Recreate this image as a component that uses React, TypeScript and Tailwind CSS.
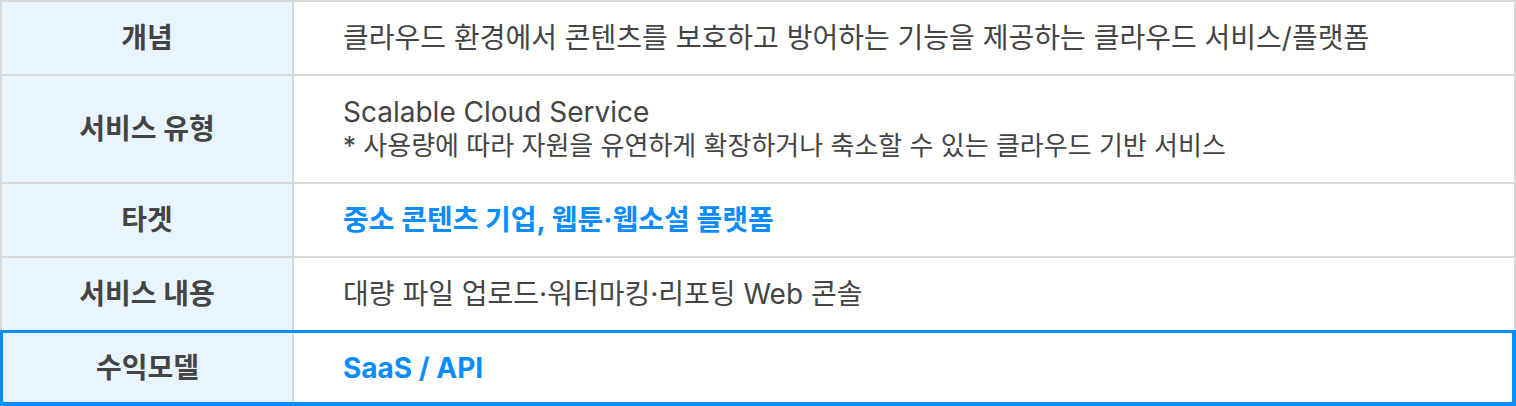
export default function App() {
  const Row = ({
    label,
    children,
    h,
    last,
  }: {
    label: string;
    children: React.ReactNode;
    h: string;
    last?: boolean;
  }) => (
    <div className={`flex ${h} ${last ? "" : "border-b-2 border-[#d9d9d9]"}`}>
      <div className="w-[292px] shrink-0 bg-[#e8f5fe] border-r-2 border-[#d9d9d9] flex items-center justify-center text-[28px] font-bold text-[#444444]">
        {label}
      </div>
      <div className="flex-1 flex flex-col justify-center pl-[49px] text-[#444444]">
        {children}
      </div>
    </div>
  );

  return (
    <div className="w-[1516px] h-[406px] bg-white font-['Inter','Noto_Sans_CJK_KR',sans-serif]">
      <div className="border-2 border-b-0 border-[#d9d9d9]">
        <Row label="개념" h="h-[74px]">
          <div className="text-[28px] leading-[34px]">
            클라우드 환경에서 콘텐츠를 보호하고 방어하는 기능을 제공하는 클라우드 서비스/플랫폼
          </div>
        </Row>
        <Row label="서비스 유형" h="h-[108px]">
          <div className="text-[28px] leading-[34px]">Scalable Cloud Service</div>
          <div className="text-[26px] leading-[34px]">
            * 사용량에 따라 자원을 유연하게 확장하거나 축소할 수 있는 클라우드 기반 서비스
          </div>
        </Row>
        <Row label="타겟" h="h-[74px]">
          <div className="text-[28px] leading-[34px] font-bold text-[#0a8cff]">
            중소 콘텐츠 기업, 웹툰·웹소설 플랫폼
          </div>
        </Row>
        <Row label="서비스 내용" h="h-[72px]" last>
          <div className="text-[28px] leading-[34px]">
            대량 파일 업로드·워터마킹·리포팅 Web 콘솔
          </div>
        </Row>
      </div>
      <div className="flex h-[76px] border-t-[3px] border-l-[3px] border-r-[4px] border-b-[4px] border-[#0a8cff]">
        <div className="w-[291px] shrink-0 bg-[#e8f5fe] border-r-2 border-[#d9d9d9] flex items-center justify-center text-[28px] font-bold text-[#444444]">
          수익모델
        </div>
        <div className="flex-1 flex items-center pl-[49px] text-[28px] font-bold text-[#0a8cff]">
          SaaS / API
        </div>
      </div>
    </div>
  );
}
